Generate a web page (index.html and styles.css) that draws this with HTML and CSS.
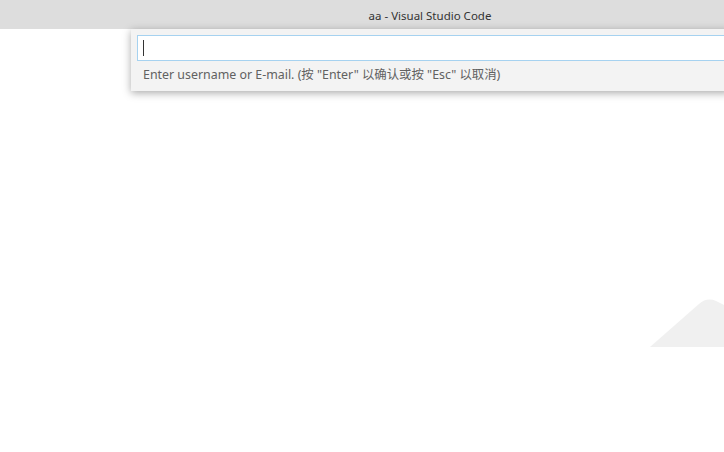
FILE: index.html
```html
<!DOCTYPE html>
<html lang="zh">
<head>
<meta charset="utf-8">
<title>aa - Visual Studio Code</title>
<link rel="stylesheet" href="styles.css">
</head>
<body>
<div class="window">
  <div class="titlebar"><span class="title">aa - Visual Studio Code</span></div>
  <div class="editor">
    <svg class="letterpress" viewBox="0 0 724 452" width="724" height="452" aria-hidden="true">
      <path d="M650 347 L699 304 Q707 297 716 301 L724 305 L724 347 Z" fill="#f0f0f0"/>
    </svg>
  </div>
  <div class="quick-input">
    <div class="input-box"><span class="caret"></span></div>
    <div class="message">Enter username or E-mail. (按 "Enter" 以确认或按 "Esc" 以取消)</div>
  </div>
</div>
</body>
</html>
```
FILE: styles.css
```css
html, body {
  margin: 0;
  padding: 0;
  width: 724px;
  height: 452px;
  overflow: hidden;
  background: #ffffff;
  font-family: "Noto Sans", "Noto Sans CJK SC", sans-serif;
}
.window {
  position: relative;
  width: 724px;
  height: 452px;
  overflow: hidden;
  display: flex;
  flex-direction: column;
}
.titlebar {
  height: 29px;
  flex: none;
  box-sizing: border-box;
  padding-left: 136px;
  background: #dddddd;
  display: flex;
  align-items: center;
  justify-content: center;
  font-size: 11.5px;
  color: #333333;
}
.title {
  padding-top: 1px;
}
.editor {
  flex: 1;
  background: #ffffff;
  position: relative;
}
.letterpress {
  position: absolute;
  left: 0;
  top: -29px;
}
.quick-input {
  position: absolute;
  left: 131px;
  top: 29px;
  width: 593px;
  padding: 6px 0 6px 6px;
  background: #f3f3f3;
  box-shadow: 0 2px 8px rgba(0, 0, 0, 0.34);
  display: flex;
  flex-direction: column;
}
.input-box {
  height: 24px;
  border: 1px solid #a6d2f0;
  border-right: none;
  background: #ffffff;
  display: flex;
  align-items: center;
  padding-left: 5px;
}
.caret {
  width: 1px;
  height: 16px;
  background: #333333;
}
.message {
  font-size: 12.4px;
  color: #616161;
  padding: 5px 0 0 6px;
  height: 24px;
  line-height: 18px;
  box-sizing: border-box;
  white-space: nowrap;
}
```
